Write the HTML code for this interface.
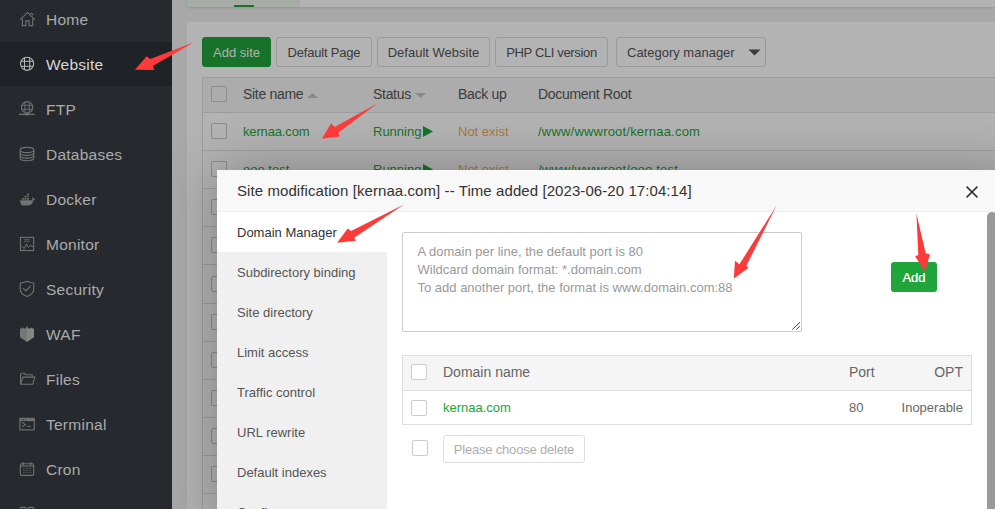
<!DOCTYPE html>
<html><head><meta charset="utf-8">
<style>
*{margin:0;padding:0;box-sizing:border-box}
html,body{width:995px;height:509px;overflow:hidden;background:#a8a8a8;font-family:"Liberation Sans",sans-serif}
#side{position:absolute;left:0;top:0;width:172px;height:509px;background:#262a2e}
.nav{position:absolute;left:0;width:172px;height:45px;color:#ababab;font-size:15.5px;line-height:46px;letter-spacing:0.25px}
.nav span{position:absolute;left:46px;top:0}
.nav.act{background:#1f2226;color:#d6d6d6;height:44px}
#icons{position:absolute;left:0;top:0}
.tabs{position:absolute;left:187px;top:-10px;width:808px;height:17px;background:#b3b3b3;border-radius:0 0 0 4px;box-shadow:0 1px 3px rgba(0,0,0,.12)}
.tabs .g{position:absolute;left:0;top:0;width:113px;height:17px;background:#a6aca6;border-radius:0 0 0 4px}
.tabs .u{position:absolute;left:47px;top:15px;width:20px;height:2px;background:#167329}
.box{position:absolute;left:187px;top:22px;width:808px;height:500px;background:#b3b3b3}
.btn{position:absolute;top:37px;height:30px;border:1px solid #9a9a9a;border-radius:3px;background:#b3b3b3;color:#3a3a3a;font-size:13px;line-height:30px;text-align:center;white-space:nowrap}
.btn.g{background:#167329;border-color:#167329;color:#b3b3b3}
.tbl{position:absolute;left:202px;top:77px;width:800px;height:440px;border-top:1px solid #9b9b9b;border-left:1px solid #9b9b9b}
.th{position:absolute;left:0;top:0;width:800px;height:35px;background:#acacac;border-bottom:1px solid #9d9d9d}
.tr{position:absolute;left:0;width:800px;height:38px;border-bottom:1px solid #9d9d9d}
.cb{position:absolute;left:8px;width:16px;height:16px;border:1px solid #8c8c8c;border-radius:2px}
.t{position:absolute;white-space:nowrap;font-size:13px}
.hd{color:#3b3b3b;font-size:14px;letter-spacing:-0.3px}
.gr{color:#167329}
.or{color:#a87937}
/* modal */
#shade{position:absolute;left:217px;top:170px;width:800px;height:360px;box-shadow:1px 1px 50px rgba(0,0,0,.3)}
#modal{position:absolute;left:217px;top:170px;width:800px;height:360px;background:#fff}
.mt{position:absolute;left:0;top:0;width:800px;height:42px;background:#f8f8f8;border-bottom:1px solid #eee;color:#333;font-size:15px;line-height:41px;letter-spacing:0.08px}
.mt span{position:absolute;left:20px;top:0}
.menu{position:absolute;left:0;top:42px;width:170px;height:320px;background:#f0f0f0}
.mi{position:absolute;left:0;width:170px;height:40px;color:#555;font-size:13px;line-height:41px}
.mi span{position:absolute;left:20px}
.mi.act{background:#fff;color:#333}
.ta{position:absolute;left:185px;top:62px;width:400px;height:100px;border:1px solid #ccc;border-radius:2px;color:#999;font-size:13px;line-height:18px;padding:9.5px 0 0 14.5px;white-space:nowrap}
.addb{position:absolute;left:674px;top:92px;width:46px;height:30px;background:#20a53a;border-radius:3px;color:#fff;font-size:13px;line-height:32px;text-align:center;text-shadow:0 0 0.4px #fff}
.dt{position:absolute;left:185px;top:185px;width:570px;height:70px;border:1px solid #ddd}
.dth{position:absolute;left:0;top:0;width:568px;height:35px;background:#f5f5f5;border-bottom:1px solid #ddd}
.mcb{position:absolute;width:16px;height:16px;border:1px solid #ccc;border-radius:2px;background:#fff}
.mtx{position:absolute;white-space:nowrap;font-size:13px;color:#666}
.pcd{position:absolute;left:226px;top:265px;width:142px;height:28px;border:1px solid #ddd;border-radius:3px;color:#aeaeae;font-size:13px;line-height:28px;text-align:center;letter-spacing:-0.2px}
.scroll{position:absolute;left:770px;top:42px;width:10px;height:400px;background:#999;border-radius:5px}
#arrows{position:absolute;left:0;top:0}
</style></head><body>
<div id="side">
  <div class="nav" style="top:-3px"><span>Home</span></div>
  <div class="nav act" style="top:42px"><span>Website</span></div>
  <div class="nav" style="top:87px"><span>FTP</span></div>
  <div class="nav" style="top:132px"><span>Databases</span></div>
  <div class="nav" style="top:177px"><span>Docker</span></div>
  <div class="nav" style="top:222px"><span>Monitor</span></div>
  <div class="nav" style="top:267px"><span>Security</span></div>
  <div class="nav" style="top:312px"><span>WAF</span></div>
  <div class="nav" style="top:357px"><span>Files</span></div>
  <div class="nav" style="top:402px"><span>Terminal</span></div>
  <div class="nav" style="top:447px"><span>Cron</span></div>
</div>
<svg id="icons" width="172" height="509" viewBox="0 0 172 509" fill="none" stroke="#727272" stroke-width="1.1">
  <!-- home -->
  <path d="M20.2,19.6 L27.5,12.4 L34.9,19.6"/>
  <path d="M22.4,18.6 V25.6 H25.9 V20.9 H29.1 V25.6 H32.7 V18.6"/>
  <path d="M30.3,13.6 A1.6,1.6 0 0 1 32.7,15.4"/>
  <!-- website globe -->
  <g stroke="#b8b8b8">
    <circle cx="27.1" cy="63.8" r="6.6"/>
    <path d="M24.5,57.8 V69.8 M29.7,57.8 V69.8 M21,61.3 H33.2 M21,66.3 H33.2" stroke-width="1"/>
  </g>
  <!-- ftp -->
  <circle cx="27.1" cy="107.3" r="5.7"/>
  <path d="M25,102 V112.5 M29.2,102 V112.5 M21.8,105.3 H32.4 M21.8,109.3 H32.4" stroke-width="0.9"/>
  <path d="M19.1,114.3 H34.7" stroke-width="1.3"/>
  <rect x="25.3" y="112.8" width="3.8" height="2.6" fill="#727272" stroke="none"/>
  <!-- databases -->
  <ellipse cx="27" cy="150" rx="6.8" ry="2.6"/>
  <path d="M20.2,150 V158 A6.8,2.7 0 0 0 33.8,158 V150"/>
  <path d="M20.2,152.8 A6.8,2.6 0 0 0 33.8,152.8 M20.2,155.5 A6.8,2.6 0 0 0 33.8,155.5"/>
  <!-- docker -->
  <g fill="#727272" stroke="none">
    <path d="M20,200.2 H33.2 Q32.6,205.6 27,205.6 H22.3 Q20.2,204.2 20,200.2 Z"/>
    <rect x="22" y="198" width="1.8" height="1.7"/><rect x="24.5" y="198" width="1.8" height="1.7"/><rect x="27" y="198" width="1.8" height="1.7"/>
    <rect x="24.5" y="195.8" width="1.8" height="1.5"/><rect x="27" y="195.8" width="1.8" height="1.5"/>
    <rect x="27" y="193.6" width="1.8" height="1.5"/>
    <path d="M32,200.2 Q32.6,197.5 32.7,196.5 L33.6,198.6 Q34.5,198.9 35.2,199.5 L33.8,200.4 Z"/>
  </g>
  <!-- monitor -->
  <rect x="20.4" y="237.4" width="13.3" height="13.1"/>
  <path d="M24,239.6 H29.8 M24,241.3 H29.8" stroke-width="0.7"/>
  <path d="M21.4,246 L24.3,248.6 L26.5,243.9 L28.4,247.4 L30.5,245.4 L33.2,246.8" stroke-width="1"/>
  <!-- security -->
  <path d="M27,281.2 Q30.5,282.6 33.8,283 V289.2 Q33.5,294 27,296.6 Q20.5,294 20.2,289.2 V283 Q23.5,282.6 27,281.2 Z"/>
  <path d="M23.2,288.3 L25.9,290.9 L30.6,285.9"/>
  <!-- waf -->
  <path d="M20,328.6 L21.6,328.6 L22.6,327.3 L23.6,328.6 L25.8,328.6 L27,325.8 L27,342 L20,337.2 Z" fill="#777" stroke="none"/>
  <path d="M34,328.6 L32.4,328.6 L31.4,327.3 L30.4,328.6 L28.2,328.6 L27,325.8 L27,342 L34,337.2 Z" fill="#858585" stroke="none"/>
  <!-- files -->
  <path d="M20.6,384 V374.2 Q20.6,373.2 21.6,373.2 H24.3 L25.4,374.7 H32.1 V377"/>
  <path d="M20.8,384.2 L22.8,377.1 H34.8 L32.8,384.2 Z"/>
  <!-- terminal -->
  <rect x="19.9" y="418.3" width="14.3" height="11.6"/>
  <rect x="19.9" y="418.3" width="14.3" height="2.8" fill="#727272" stroke="none"/>
  <g fill="#262a2e" stroke="none"><circle cx="21.8" cy="419.7" r="0.55"/><circle cx="23.6" cy="419.7" r="0.55"/><circle cx="25.4" cy="419.7" r="0.55"/></g>
  <path d="M22.2,422.4 L25.3,424.6 L22.2,426.8"/>
  <path d="M26.8,426.4 H31" stroke-width="0.9"/>
  <!-- cron -->
  <rect x="20.3" y="463.8" width="13.4" height="11.6" rx="1.2"/>
  <path d="M20.3,466 H33.7"/>
  <path d="M23.4,462.3 V465 M30.8,462.3 V465" stroke-width="1.4"/>
  <path d="M23.2,468.3 H24.6 M26.3,468.3 H27.7 M29.4,468.3 H30.8 M23.2,470.4 H24.6 M26.3,470.4 H27.7 M29.4,470.4 H30.8 M23.2,472.4 H24.6 M26.3,472.4 H27.7 M29.4,472.4 H30.8" stroke-width="0.8"/>
  <!-- app store partial -->
  <rect x="20.3" y="507.4" width="5.8" height="5.8" rx="1.4"/>
  <rect x="28" y="507.4" width="5.8" height="5.8" rx="1.4"/>
</svg>

<div class="tabs"><div class="g"></div><div class="u"></div></div>
<div class="box"></div>
<div class="btn g" style="left:202px;width:69px">Add site</div>
<div class="btn" style="left:276px;width:96px;letter-spacing:-0.2px">Default Page</div>
<div class="btn" style="left:377px;width:113px">Default Website</div>
<div class="btn" style="left:495px;width:113px;letter-spacing:-0.35px">PHP CLI version</div>
<div class="btn" style="left:616px;width:150px;text-align:left;padding-left:10px">Category manager<svg style="position:absolute;left:131px;top:11px" width="13" height="7" viewBox="0 0 13 7"><path d="M0.5,0.5 H12.5 L6.5,6.5 Z" fill="#3a3a3a"/></svg></div>

<div class="tbl">
  <div class="th">
    <div class="cb" style="top:8px"></div>
    <div class="t hd" style="left:40px;top:8px">Site name</div>
    <svg style="position:absolute;left:104px;top:15px" width="11" height="5"><path d="M0,5 L5.5,0 L11,5 Z" fill="#8a8a8a"/></svg>
    <div class="t hd" style="left:170px;top:8px">Status</div>
    <svg style="position:absolute;left:212px;top:15px" width="11" height="5"><path d="M0,0 L11,0 L5.5,5 Z" fill="#8a8a8a"/></svg>
    <div class="t hd" style="left:255px;top:8px">Back up</div>
    <div class="t hd" style="left:335px;top:8px">Document Root</div>
  </div>
  <div class="tr" style="top:35.00px">
    <div class="cb" style="top:10px"></div>
    <div class="t gr" style="left:40px;top:11px;letter-spacing:-0.15px">kernaa.com</div>
    <div class="t gr" style="left:170px;top:11px">Running</div>
    <svg style="position:absolute;left:220px;top:13px" width="10" height="11"><path d="M0,0 L10,5.5 L0,11 Z" fill="#167329"/></svg>
    <div class="t or" style="left:255px;top:11px">Not exist</div>
    <div class="t gr" style="left:335px;top:11px;letter-spacing:0.2px">/www/wwwroot/kernaa.com</div>
  </div>
  <div class="tr" style="top:73.16px">
    <div class="cb" style="top:10px"></div>
    <div class="t gr" style="left:40px;top:11px">ooo.test</div>
    <div class="t gr" style="left:170px;top:11px">Running</div>
    <svg style="position:absolute;left:220px;top:13px" width="10" height="11"><path d="M0,0 L10,5.5 L0,11 Z" fill="#167329"/></svg>
    <div class="t or" style="left:255px;top:11px">Not exist</div>
    <div class="t gr" style="left:335px;top:11px;letter-spacing:0.2px">/www/wwwroot/ooo.test</div>
  </div>
  <div class="tr" style="top:111.32px"><div class="cb" style="top:10px"></div></div>
  <div class="tr" style="top:149.48px"><div class="cb" style="top:10px"></div></div>
  <div class="tr" style="top:187.64px"><div class="cb" style="top:10px"></div></div>
  <div class="tr" style="top:225.80px"><div class="cb" style="top:10px"></div></div>
  <div class="tr" style="top:263.96px"><div class="cb" style="top:10px"></div></div>
  <div class="tr" style="top:302.12px"><div class="cb" style="top:10px"></div></div>
  <div class="tr" style="top:340.28px"><div class="cb" style="top:10px"></div></div>
  <div class="tr" style="top:378.44px"><div class="cb" style="top:10px"></div></div>
</div>

<div id="shade"></div>
<div id="modal">
  <div class="mt"><span>Site modification [kernaa.com] -- Time added [2023-06-20 17:04:14]</span>
    <svg style="position:absolute;left:749px;top:16px" width="12" height="12" viewBox="0 0 12 12"><path d="M0.6,0.6 L11.4,11.4 M11.4,0.6 L0.6,11.4" stroke="#333" stroke-width="1.5"/></svg>
  </div>
  <div class="menu">
    <div class="mi act" style="top:0"><span>Domain Manager</span></div>
    <div class="mi" style="top:40px"><span>Subdirectory binding</span></div>
    <div class="mi" style="top:80px"><span>Site directory</span></div>
    <div class="mi" style="top:120px"><span>Limit access</span></div>
    <div class="mi" style="top:160px"><span>Traffic control</span></div>
    <div class="mi" style="top:200px"><span>URL rewrite</span></div>
    <div class="mi" style="top:240px"><span>Default indexes</span></div>
    <div class="mi" style="top:280px"><span>Config</span></div>
  </div>
  <div class="ta">A domain per line, the default port is 80<br>Wildcard domain format: *.domain.com<br>To add another port, the format is www.domain.com:88
    <svg style="position:absolute;left:388px;top:88px" width="10" height="10" viewBox="0 0 10 10"><path d="M1.2,8.7 L8.9,1.2 M5.3,8.5 L8.9,5.2" stroke="#444" stroke-width="1"/></svg>
  </div>
  <div class="addb">Add</div>
  <div class="dt">
    <div class="dth"></div>
    <div class="mcb" style="left:8px;top:8px"></div>
    <div class="mtx" style="left:40px;top:8px;font-size:14px">Domain name</div>
    <div class="mtx" style="left:446px;top:8px;font-size:14px">Port</div>
    <div class="mtx" style="right:8px;top:8px;font-size:14px">OPT</div>
    <div class="mcb" style="left:8px;top:44px"></div>
    <div class="mtx" style="left:40px;top:44px;color:#20a53a">kernaa.com</div>
    <div class="mtx" style="left:446px;top:44px">80</div>
    <div class="mtx" style="right:8px;top:44px">Inoperable</div>
  </div>
  <div class="mcb" style="left:195px;top:270px"></div>
  <div class="pcd">Please choose delete</div>
  <div class="scroll"></div>
</div>

<svg id="arrows" width="995" height="509" viewBox="0 0 995 509" fill="#fd3a3a">
  <path d="M194,42.3 L150.2,58.9 L146.7,56.2 L134.9,69.7 L154.2,69.9 L152.9,65.9 Z"/>
  <path d="M377.3,103.4 L334.6,127 L331.2,123.3 L321.9,138.7 L340,136.5 L338.1,132.8 Z"/>
  <path d="M403.9,204.4 L351.1,230.9 L347.7,228.5 L337.1,242.7 L356,240.8 L354.1,237.8 Z"/>
  <path d="M776.6,205.4 L739.4,264.3 L735,260.8 L733.8,278.4 L748.6,267.8 L746.2,266.1 Z"/>
  <path d="M916.4,213.4 L918.3,255 L915.1,256.3 L924.8,271.3 L930,254.5 L925.7,253.2 Z"/>
</svg>
</body></html>
